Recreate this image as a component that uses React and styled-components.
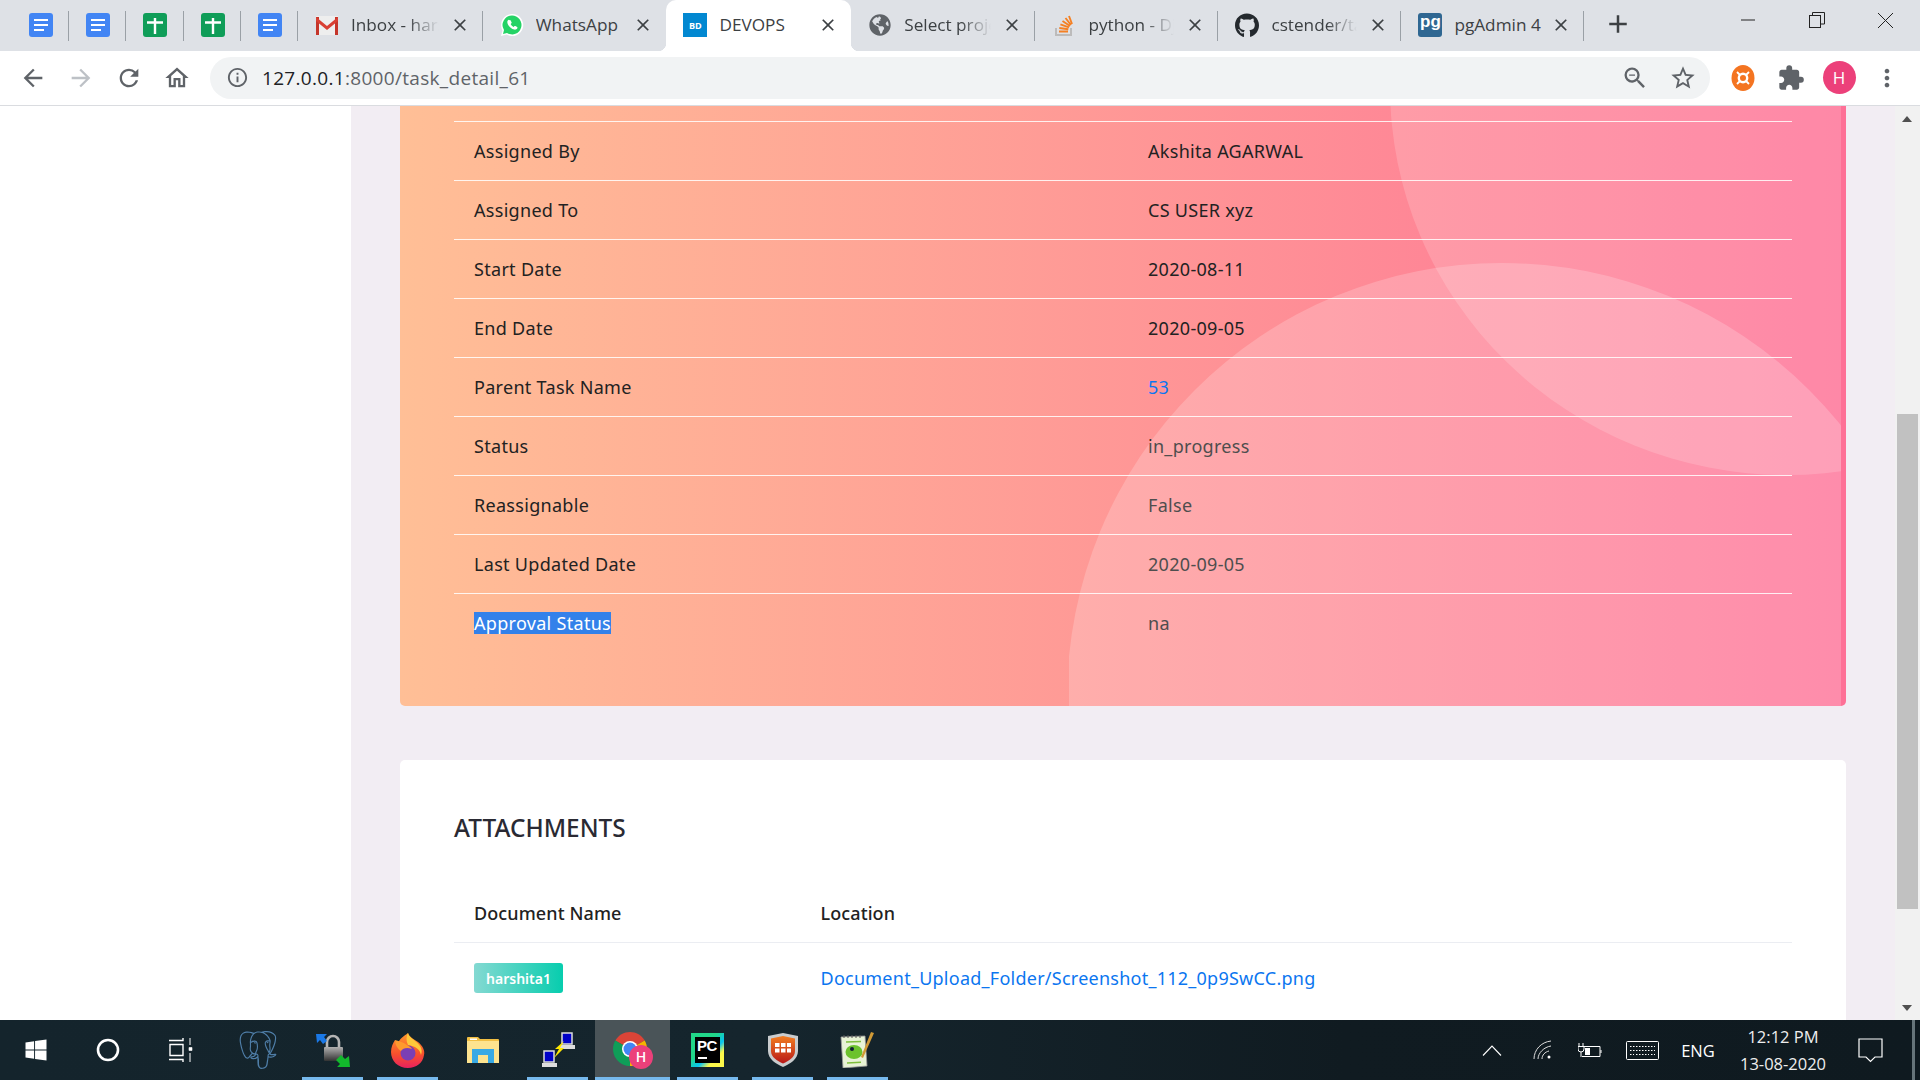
import React from "react";
import styled, { createGlobalStyle } from "styled-components";
import { MdArrowBack, MdArrowForward, MdRefresh, MdOutlineHome, MdInfoOutline, MdOutlineZoomOut, MdStarBorder, MdExtension, MdMoreVert, MdAdd, MdClose } from "react-icons/md";
import { FaGithub, FaGlobeAmericas, FaWindows } from "react-icons/fa";
import { SiPostgresql } from "react-icons/si";

const GlobalStyle = createGlobalStyle`
  html, body { margin: 0; padding: 0; height: 100%; overflow: hidden; background: #fff; }
  * { box-sizing: border-box; }
`;

const Screen = styled.div`
  width: 1920px;
  height: 1080px;
  display: flex;
  flex-direction: column;
  overflow: hidden;
  font-family: "Open Sans", "Liberation Sans", sans-serif;
`;

/* browser chrome */
const TabStrip = styled.div`
  height: 51px;
  flex: none;
  display: flex;
  background: #dee1e6;
  padding-left: 12px;
`;

const PinnedTab = styled.div`
  position: relative;
  width: 57.2px;
  display: flex;
  align-items: center;
  padding: 0 0 1px 17px;
  &:after {
    content: "";
    position: absolute;
    right: 0;
    top: 11px;
    bottom: 10px;
    width: 1px;
    background: #9aa0a6;
  }
`;

const Tab = styled.div`
  position: relative;
  flex: none;
  width: ${props => props.$w}px;
  display: flex;
  align-items: center;
  padding: 0 13px 1px 17px;
  background: ${props => props.$active ? "#fff" : "transparent"};
  border-radius: 10px 10px 0 0;
  ${props => props.$sep && `
    &:after {
      content: "";
      position: absolute;
      right: 0;
      top: 11px;
      bottom: 10px;
      width: 1px;
      background: #9aa0a6;
    }
  `}
  ${props => props.$active && `
    &:before {
      content: "";
      position: absolute;
      left: -8px;
      bottom: 0;
      width: 8px;
      height: 8px;
      background: radial-gradient(circle at 0 0, transparent 8px, #fff 8.5px);
    }
    &:after {
      content: "";
      position: absolute;
      right: -8px;
      bottom: 0;
      width: 8px;
      height: 8px;
      background: radial-gradient(circle at 100% 0, transparent 8px, #fff 8.5px);
    }
  `}
`;

const TabIcon = styled.span`
  flex: none;
  width: 24px;
  height: 24px;
  display: flex;
  align-items: center;
  justify-content: center;
`;

const TabTitle = styled.span`
  flex: 1;
  min-width: 0;
  margin: 0 ${props => props.$fade ? 11 : 4}px 2px 12px;
  font-size: 17.2px;
  color: #3c4043;
  white-space: nowrap;
  overflow: hidden;
  ${props => props.$fade && `
    -webkit-mask-image: linear-gradient(to right, #000 65%, transparent 100%);
    mask-image: linear-gradient(to right, #000 65%, transparent 100%);
  `}
`;

const TabClose = styled(MdClose)`
  flex: none;
  width: 20px;
  height: 20px;
  color: #3c4043;
`;

const NewTab = styled(MdAdd)`
  width: 30px;
  height: 30px;
  margin: 9px 0 0 19px;
  color: #3c4043;
`;

const WindowButtons = styled.div`
  margin-left: auto;
  display: flex;
  height: 40px;
`;

const WindowButton = styled.div`
  width: 69px;
  display: flex;
  align-items: center;
  justify-content: center;
`;

const Toolbar = styled.div`
  height: 55px;
  flex: none;
  display: flex;
  align-items: center;
  background: #fff;
  border-bottom: 1px solid #dadce0;
  padding-bottom: 1px;
`;

const NavButton = styled.div`
  flex: none;
  width: 48px;
  display: flex;
  justify-content: center;
  color: ${props => props.$off ? "#bdc1c6" : "#5f6368"};
  font-size: 28px;
`;

const NavGroup = styled.div`
  display: flex;
  padding-left: 9px;
  width: 210px;
`;

const Omnibox = styled.div`
  width: 1500px;
  height: 42px;
  display: flex;
  align-items: center;
  padding: 0 13px 0 16px;
  border-radius: 21px;
  background: #f1f3f4;
  color: #5f6368;
`;

const Url = styled.span`
  margin-left: 13px;
  font-size: 19px;
  letter-spacing: 0.31px;
  color: #5f6368;
  & b { font-weight: 400; color: #202124; }
`;

const OmniRight = styled.div`
  margin-left: auto;
  display: flex;
  align-items: center;
  gap: 20px;
  font-size: 28px;
`;

const ExtButtons = styled.div`
  display: flex;
  align-items: center;
  padding-left: 9px;
  color: #5f6368;
  font-size: 28px;
`;

const ExtSlot = styled.div`
  width: 48px;
  display: flex;
  justify-content: center;
`;

const Avatar = styled.div`
  width: 33px;
  height: 33px;
  border-radius: 50%;
  background: #ec407a;
  color: #fff;
  font-size: 17px;
  display: flex;
  align-items: center;
  justify-content: center;
`;

/* page */
const Viewport = styled.div`
  flex: 1;
  min-height: 0;
  display: flex;
  overflow: hidden;
`;

const Sidebar = styled.div`
  flex: none;
  width: 351px;
  background: #fff;
`;

const Main = styled.div`
  flex: 1;
  min-width: 0;
  padding: 0 49px;
  background: #f2edf3;
  font-family: "Noto Sans", "Open Sans", sans-serif;
  overflow: hidden;
`;

const GradientCard = styled.div`
  position: relative;
  height: 600px;
  padding: 15px 49px 0 54px;
  background: linear-gradient(to right, #ffbf96, #fe7096);
  border-right: 5px solid #fe7096;
  border-radius: 0 0 5px 5px;
  overflow: hidden;
`;

const Circles = styled.svg`
  position: absolute;
  left: 0;
  top: 0;
  pointer-events: none;
`;

const DetailRow = styled.div`
  height: 59px;
  display: grid;
  grid-template-columns: 674px 1fr;
  align-items: center;
  padding: 0 0 1px 20px;
  border-top: 1px solid rgba(255, 255, 255, 0.85);
  font-size: 18px;
  letter-spacing: 0.3px;
  color: #222;
`;

const Selected = styled.span`
  justify-self: start;
  line-height: 22px;
  background: #3381ea;
  color: #fff;
`;

const TaskLink = styled.a`
  color: #0b76f0;
`;

const WhiteCard = styled.div`
  margin-top: 54px;
  padding: 54px 54px 80px;
  background: #fff;
  border-radius: 5px;
`;

const CardTitle = styled.h4`
  margin: 0 0 42px;
  font-size: 24.4px;
  line-height: 28px;
  font-weight: 500;
  color: #2a2a33;
`;

const AttachRow = styled.div`
  display: grid;
  grid-template-columns: 346.5px 1fr;
  align-items: center;
  padding: ${props => props.$head ? "15px 20px 14px" : "20px"};
  border-bottom: ${props => props.$head ? "1px solid #ebedf2" : "none"};
  font-size: 18px;
  letter-spacing: ${props => props.$head ? 0.1 : 0.25}px;
  font-weight: ${props => props.$head ? 500 : 400};
  color: #222;
  line-height: 29px;
`;

const Badge = styled.span`
  justify-self: start;
  width: 89px;
  height: 30px;
  display: flex;
  align-items: center;
  justify-content: center;
  border-radius: 3px;
  background: linear-gradient(to right, #84d9d2, #07cdae);
  color: #fff;
  font-size: 14px;
  letter-spacing: 0;
  font-weight: 600;
`;

const DocLink = styled.a`
  color: #0b76f0;
`;

const ScrollTrack = styled.div`
  flex: none;
  width: 25px;
  position: relative;
  background: #f1f1f1;
`;

const ScrollThumb = styled.div`
  position: absolute;
  left: 2px;
  right: 2px;
  top: 308px;
  height: 495px;
  background: #c1c1c1;
`;

const ScrollArrow = styled.div`
  position: absolute;
  left: 7px;
  ${props => props.$down ? "bottom: 9px;" : "top: 10px;"}
  border-left: 5.5px solid transparent;
  border-right: 5.5px solid transparent;
  ${props => props.$down ? "border-top: 6px solid #505050;" : "border-bottom: 6px solid #505050;"}
`;

/* taskbar */
const Taskbar = styled.div`
  height: 60px;
  flex: none;
  display: flex;
  align-items: stretch;
  background: linear-gradient(to right, #14242c, #15252d 40%, #101b21 70%, #0f1a20);
`;

const ShellSlot = styled.div`
  width: 72px;
  display: flex;
  align-items: center;
  justify-content: center;
  color: #fff;
`;

const AppSlot = styled.div`
  position: relative;
  width: 75px;
  display: flex;
  align-items: center;
  justify-content: center;
  background: ${props => props.$active ? "#4a5458" : "transparent"};
  ${props => props.$running && `
    &:after {
      content: "";
      position: absolute;
      bottom: 0;
      left: ${props.$active ? 0 : 7}px;
      right: ${props.$active ? 0 : 7}px;
      height: 3px;
      background: #76b9ed;
    }
  `}
`;

const AppGroup = styled.div`
  display: flex;
  margin-left: 4px;
`;

const Tray = styled.div`
  margin-left: auto;
  display: flex;
  align-items: center;
  color: #fff;
  font-size: 16.5px;
`;

const TraySlot = styled.div`
  width: ${props => props.$w}px;
  display: flex;
  align-items: center;
  justify-content: center;
`;

const Clock = styled.div`
  width: 118px;
  text-align: center;
  line-height: 27px;
  font-size: 16.5px;
  color: #eee;
`;

const PeekLine = styled.div`
  width: 3px;
  height: 100%;
  background: #66747a;
`;

const DocsIcon = () => (
  <svg width="24" height="24" viewBox="0 0 24 24">
    <rect width="24" height="24" rx="3" fill="#4285f4" />
    <path d="M5 7h14M5 12h14M5 17h10" stroke="#fff" strokeWidth="2.2" />
  </svg>
);

const SheetsIcon = () => (
  <svg width="24" height="24" viewBox="0 0 24 24">
    <rect width="24" height="24" rx="3" fill="#0f9d58" />
    <path d="M4 9.5h16M12 5v16" stroke="#fff" strokeWidth="2.4" />
  </svg>
);

const GmailIcon = () => (
  <svg width="24" height="22" viewBox="0 0 24 22">
    <rect x="1" y="2" width="22" height="19" fill="#eee" />
    <path d="M1 21V3h3v18zM20 21V3h3v18z" fill="#c5352a" />
    <path d="M1 3l11 9 11-9v4l-11 9L1 7z" fill="#d93f33" />
  </svg>
);

const WhatsAppIcon = () => (
  <svg width="24" height="24" viewBox="0 0 24 24">
    <path d="M12 1a11 11 0 0 0-9.500 16.500L1 23l5.700-1.500A11 11 0 1 0 12 1z" fill="#fff" />
    <path d="M12 2.600a9.400 9.400 0 0 0-8 14.400l-1 3.900 4-1a9.400 9.400 0 1 0 5-17.300z" fill="#25d366" />
    <path d="M8.500 6.800c-.8.600-1.400 1.600-1.100 2.900.5 3 3.800 6.400 6.900 6.900 1.300.2 2.300-.3 2.900-1.100.4-.5.3-1.100-.1-1.400l-1.700-1c-.4-.2-.8-.2-1.100.1l-.6.700c-1.100-.4-2.600-1.900-3-3l.7-.6c.3-.3.4-.7.2-1.100l-1-1.700c-.3-.4-.8-.6-1.100-.2z" fill="#fff" />
  </svg>
);

const BdIcon = styled.span`
  width: 24px;
  height: 24px;
  background: #0288d1;
  color: #fff;
  font: 700 9px "Open Sans", sans-serif;
  display: flex;
  align-items: center;
  justify-content: center;
`;

const PgIcon = styled.span`
  width: 24px;
  height: 24px;
  border-radius: 3px;
  background: #2f6792;
  color: #fff;
  font: 700 17px/18px "Liberation Sans", sans-serif;
  display: flex;
  justify-content: center;
`;

const StackIcon = () => (
  <svg width="24" height="24" viewBox="0 0 24 24">
    <path d="M4 15v7h15v-7" fill="none" stroke="#bcbbbb" strokeWidth="2" />
    <path d="M7 18.500h9M7.300 15l9 1.200M8.400 11.400l8.600 3M10.500 8l7.500 5M13.500 5l5.500 7M17 3l3 8" stroke="#f48024" strokeWidth="1.900" fill="none" />
  </svg>
);

const MinimizeIcon = () => (
  <svg width="16" height="16" viewBox="0 0 16 16"><path d="M1 8h14" stroke="#222" strokeWidth="1" /></svg>
);

const RestoreIcon = () => (
  <svg width="16" height="16" viewBox="0 0 16 16" fill="none" stroke="#222" strokeWidth="1">
    <rect x="0.500" y="3.500" width="11" height="12" />
    <path d="M3.500 3.500v-3h12v11.500h-4" />
  </svg>
);

const CloseIcon = () => (
  <svg width="17" height="17" viewBox="0 0 17 17"><path d="M1 1l15 15M16 1L1 16" stroke="#222" strokeWidth="1" /></svg>
);

const ExtensionBall = () => (
  <svg width="24" height="26" viewBox="0 0 24 26">
    <ellipse cx="12" cy="13" rx="11.500" ry="13" fill="#f47421" />
    <circle cx="12" cy="13" r="4.200" fill="none" stroke="#fff" strokeWidth="2.400" />
    <path d="M6 7l3 3M18 7l-3 3M6 19l3-3M18 19l-3-3" stroke="#fff" strokeWidth="1.800" />
  </svg>
);

const TaskViewIcon = () => (
  <svg width="26" height="26" viewBox="0 0 26 26" fill="none" stroke="#fff" strokeWidth="1.400">
    <path d="M2 3.500h14V1M2 22.500h14V25M3 7.500h13v11H3z" />
    <path d="M22 10.500h3v3h-3z" fill="#fff" strokeWidth="0.600" />
    <path d="M23 1v7M23 16v9" strokeWidth="1" />
  </svg>
);

const ElephantIcon = styled(SiPostgresql)`
  width: 38px;
  height: 38px;
  color: #4f7ea8;
`;

const LockIcon = () => (
  <svg width="36" height="36" viewBox="0 0 36 36">
    <defs>
      <linearGradient id="lockBody" x1="0" y1="0" x2="0" y2="1">
        <stop offset="0" stopColor="#b0b0b0" />
        <stop offset="1" stopColor="#333" />
      </linearGradient>
    </defs>
    <path d="M12 16v-6a6 6 0 0 1 12 0v6" fill="none" stroke="#b5b5b5" strokeWidth="2.600" />
    <rect x="9" y="15" width="19" height="14" rx="1" fill="url(#lockBody)" />
    <path d="M1 2h11l-3 3 3 4-4 3-3-4-3 3z" fill="#1a78e6" />
    <path d="M35 35H22l3-3-4-4 5-5 4 4 4-3z" fill="#12b82c" />
  </svg>
);

const FirefoxIcon = () => (
  <svg width="35" height="36" viewBox="0 0 35 36">
    <defs>
      <linearGradient id="ffx" x1="0.500" y1="0" x2="0.500" y2="1">
        <stop offset="0" stopColor="#ff9a2e" />
        <stop offset="0.600" stopColor="#f8502d" />
        <stop offset="1" stopColor="#e8215f" />
      </linearGradient>
    </defs>
    <path d="M18 1c1 4 6 6 10 9 5 4 7 9 6 13-1 8-8 13-16 13C8 36 1 29 1 20 1 15 3 11 5 8c.5 2 1.500 3 3 4 1-5 6-8 10-11z" fill="url(#ffx)" />
    <path d="M18 1c1 5 9 8 12 13 2 3 2 6 1 9-1-6-6-9-13-10-2-4-2-8 0-12z" fill="#ffc93a" />
    <circle cx="18" cy="21" r="7.500" fill="#7b3fb5" />
    <path d="M5 8c3 1 8 2 12 5 2 1 4 2 5 4-5-2-9-1-11 2-3-2-6-6-6-11z" fill="#ff9a2e" />
  </svg>
);

const FolderIcon = () => (
  <svg width="32" height="26" viewBox="0 0 32 26">
    <path d="M0 1a1 1 0 0 1 1-1h10l2 2h18a1 1 0 0 1 1 1v5H0z" fill="#f2c044" />
    <rect x="3" y="1.500" width="7" height="1.500" fill="#fff" />
    <rect y="4" width="32" height="22" fill="#fde38f" />
    <path d="M5 12h22v14h-6v-8H11v8H5z" fill="#38a9e4" />
  </svg>
);

const NetworkIcon = () => (
  <svg width="34" height="36" viewBox="0 0 34 36">
    <rect x="21" y="1" width="10" height="11" fill="#0000c8" stroke="#ddd" strokeWidth="1.500" />
    <rect x="19" y="13" width="15" height="4" fill="#ddd" />
    <rect x="3" y="19" width="10" height="11" fill="#0000c8" stroke="#ddd" strokeWidth="1.500" />
    <rect x="1" y="31" width="15" height="4" fill="#ddd" />
    <path d="M23 9l-9 8h4l-5 9 10-10h-4z" fill="#ffe800" />
  </svg>
);

const ChromeIcon = () => (
  <svg width="42" height="38" viewBox="0 0 42 38">
    <path d="M18 18L3.300 9.500A17 17 0 0 1 32.700 9.500z" fill="#db4437" />
    <path d="M18 18L3.300 9.500A17 17 0 0 0 18 35z" fill="#0f9d58" />
    <path d="M18 18L32.700 9.500A17 17 0 0 1 18 35z" fill="#f4b400" />
    <circle cx="18" cy="18" r="8" fill="#fff" />
    <circle cx="18" cy="18" r="6.500" fill="#4285f4" />
    <circle cx="29" cy="26" r="12" fill="#ec407a" />
    <text x="29" y="31" textAnchor="middle" fontSize="14" fontWeight="600" fontFamily="Open Sans, sans-serif" fill="#fff">H</text>
  </svg>
);

const PyCharmBox = styled.span`
  width: 33px;
  height: 34px;
  padding: 4px;
  background: linear-gradient(135deg, #21d789 40%, #07c3f2 60%, #fcf84a 75%);
  display: flex;
`;

const PyCharmInner = styled.span`
  position: relative;
  flex: 1;
  background: #000;
  color: #fff;
  font: 700 15px/18px "Liberation Sans", sans-serif;
  padding-left: 2px;
  letter-spacing: -0.5px;
  &:after {
    content: "";
    position: absolute;
    left: 3px;
    bottom: 4px;
    width: 9px;
    height: 2px;
    background: #fff;
  }
`;

const ShieldIcon = () => (
  <svg width="30" height="34" viewBox="0 0 30 34">
    <defs>
      <linearGradient id="shieldFill" x1="0" y1="0" x2="0" y2="1">
        <stop offset="0" stopColor="#f27d20" />
        <stop offset="1" stopColor="#b81818" />
      </linearGradient>
    </defs>
    <path d="M15 0l15 3v15c0 8-8 13-15 16C8 31 0 26 0 18V3z" fill="#c9ccce" />
    <path d="M15 3l12 2.500V18c0 6-6 10-12 12.500C9 28 3 24 3 18V5.500z" fill="url(#shieldFill)" />
    <path d="M7 10h4.500v4H7zM13 10h4.500v4H13zM19 10h4v4h-4zM7 15.500h4.500v4H7zM13 15.500h4.500v4H13zM19 15.500h4v4h-4z" fill="#fff" />
  </svg>
);

const NotepadIcon = () => (
  <svg width="35" height="36" viewBox="0 0 35 36">
    <path d="M1 5l24-1 2 30-24 2z" fill="#e8f3d6" stroke="#999" strokeWidth="0.800" />
    <path d="M4 3v3M8 3v3M12 3v3M16 3v3M20 3v3" stroke="#555" />
    <path d="M6 10l15-.500M7 31l14-.800" stroke="#7fbf3c" strokeWidth="1.500" />
    <ellipse cx="14" cy="20" rx="8.500" ry="7" fill="#6cc22d" />
    <circle cx="12" cy="17" r="2" fill="#123" />
    <path d="M34 1L23 26l-2-1L31 0z" fill="#d09a36" />
  </svg>
);

const WifiIcon = () => (
  <svg width="20" height="20" viewBox="0 0 20 20" fill="none" stroke="#ddd" strokeWidth="1">
    <path d="M1 19C1 10 8 2 18 1M5 19c0-6 6-12 13-13M9 19c0-4 3-7 7-8" />
    <circle cx="16" cy="17" r="1.500" fill="#fff" stroke="none" />
  </svg>
);

const BatteryIcon = () => (
  <svg width="24" height="16" viewBox="0 0 24 16" fill="none" stroke="#fff" strokeWidth="1">
    <path d="M4 4.500h18v10H4" />
    <rect x="7" y="6" width="5" height="7" fill="#fff" stroke="none" />
    <path d="M23 8v3M1 1v3M5 1v3M0 4.500h6V7a3 3 0 0 1-6 0zM3 10v5" />
  </svg>
);

const KeyboardIcon = () => (
  <svg width="33" height="19" viewBox="0 0 33 19" fill="none" stroke="#fff" strokeWidth="1">
    <rect x="0.500" y="0.500" width="32" height="18" rx="1" />
    <path d="M4 5.500h25M4 9.500h25M4 13.500h4M10 13.500h13M25 13.500h4" strokeDasharray="1.500 1.500" />
  </svg>
);

const NotifyIcon = () => (
  <svg width="25" height="25" viewBox="0 0 25 25" fill="none" stroke="#fff" strokeWidth="1.200">
    <path d="M1 1h23v18h-7l-4.500 4.500L8 19H1z" />
  </svg>
);

const tabs = [
  { title: "Inbox - harshita", icon: <GmailIcon />, w: 184.8, sep: true, fade: true },
  { title: "WhatsApp", icon: <WhatsAppIcon />, w: 183.7 },
  { title: "DEVOPS", icon: <BdIcon>BD</BdIcon>, w: 184.8, active: true },
  { title: "Select project", icon: <FaGlobeAmericas size={22} color="#5f6368" />, w: 184.2, sep: true, fade: true },
  { title: "python - Django", icon: <StackIcon />, w: 183, sep: true, fade: true },
  { title: "cstender/task", icon: <FaGithub size={25} color="#24292e" />, w: 183, sep: true, fade: true },
  { title: "pgAdmin 4", icon: <PgIcon>pg</PgIcon>, w: 183, sep: true },
];

const details = [
  ["Assigned By", "Akshita AGARWAL"],
  ["Assigned To", "CS USER xyz"],
  ["Start Date", "2020-08-11"],
  ["End Date", "2020-09-05"],
  ["Parent Task Name", <TaskLink key="l">53</TaskLink>],
  ["Status", "in_progress"],
  ["Reassignable", "False"],
  ["Last Updated Date", "2020-09-05"],
  [<Selected key="s">Approval Status</Selected>, "na"],
];

const apps = [
  { icon: <ElephantIcon /> },
  { icon: <LockIcon />, running: true },
  { icon: <FirefoxIcon />, running: true },
  { icon: <FolderIcon /> },
  { icon: <NetworkIcon />, running: true },
  { icon: <ChromeIcon />, running: true, active: true },
  { icon: <PyCharmBox><PyCharmInner>PC</PyCharmInner></PyCharmBox>, running: true },
  { icon: <ShieldIcon />, running: true },
  { icon: <NotepadIcon />, running: true },
];

export default function App() {
  return (
    <Screen>
      <GlobalStyle />
      <TabStrip>
        {[DocsIcon, DocsIcon, SheetsIcon, SheetsIcon, DocsIcon].map((Icon, i) => (
          <PinnedTab key={i}><Icon /></PinnedTab>
        ))}
        {tabs.map(t => (
          <Tab key={t.title} $w={t.w} $sep={t.sep} $active={t.active}>
            <TabIcon>{t.icon}</TabIcon>
            <TabTitle $fade={t.fade}>{t.title}</TabTitle>
            <TabClose />
          </Tab>
        ))}
        <NewTab />
        <WindowButtons>
          <WindowButton><MinimizeIcon /></WindowButton>
          <WindowButton><RestoreIcon /></WindowButton>
          <WindowButton><CloseIcon /></WindowButton>
        </WindowButtons>
      </TabStrip>
      <Toolbar>
        <NavGroup>
          <NavButton><MdArrowBack /></NavButton>
          <NavButton $off><MdArrowForward /></NavButton>
          <NavButton><MdRefresh /></NavButton>
          <NavButton><MdOutlineHome /></NavButton>
        </NavGroup>
        <Omnibox>
          <MdInfoOutline size={23} />
          <Url><b>127.0.0.1</b>:8000/task_detail_61</Url>
          <OmniRight>
            <MdOutlineZoomOut />
            <MdStarBorder />
          </OmniRight>
        </Omnibox>
        <ExtButtons>
          <ExtSlot><ExtensionBall /></ExtSlot>
          <ExtSlot><MdExtension /></ExtSlot>
          <ExtSlot><Avatar>H</Avatar></ExtSlot>
          <ExtSlot><MdMoreVert /></ExtSlot>
        </ExtButtons>
      </Toolbar>
      <Viewport>
        <Sidebar />
        <Main>
          <GradientCard>
            {details.map((d, i) => (
              <DetailRow key={i}>
                {d[0]}
                <span>{d[1]}</span>
              </DetailRow>
            ))}
            <Circles width="1441" height="600" viewBox="0 0 1441 600">
              <ellipse cx="1386" cy="-19" rx="396" ry="388" fill="rgba(255,255,255,0.17)" />
              <clipPath id="lowerClip"><rect x="669" y="0" width="772" height="600" /></clipPath>
              <circle cx="1102" cy="592" r="435" fill="rgba(255,255,255,0.2)" clipPath="url(#lowerClip)" />
            </Circles>
          </GradientCard>
          <WhiteCard>
            <CardTitle>ATTACHMENTS</CardTitle>
            <AttachRow $head>
              <span>Document Name</span>
              <span>Location</span>
            </AttachRow>
            <AttachRow>
              <Badge>harshita1</Badge>
              <DocLink>Document_Upload_Folder/Screenshot_112_0p9SwCC.png</DocLink>
            </AttachRow>
          </WhiteCard>
        </Main>
        <ScrollTrack>
          <ScrollArrow />
          <ScrollThumb />
          <ScrollArrow $down />
        </ScrollTrack>
      </Viewport>
      <Taskbar>
        <ShellSlot><FaWindows size={24} /></ShellSlot>
        <ShellSlot>
          <svg width="24" height="24" viewBox="0 0 24 24"><circle cx="12" cy="12" r="10" fill="none" stroke="#fff" strokeWidth="2.600" /></svg>
        </ShellSlot>
        <ShellSlot><TaskViewIcon /></ShellSlot>
        <AppGroup>
          {apps.map((a, i) => (
            <AppSlot key={i} $running={a.running} $active={a.active}>{a.icon}</AppSlot>
          ))}
        </AppGroup>
        <Tray>
          <TraySlot $w={54}>
            <svg width="20" height="11" viewBox="0 0 20 11"><path d="M1 10.500L10 1l9 9.500" fill="none" stroke="#fff" strokeWidth="1.100" /></svg>
          </TraySlot>
          <TraySlot $w={48}><WifiIcon /></TraySlot>
          <TraySlot $w={46}><BatteryIcon /></TraySlot>
          <TraySlot $w={59}><KeyboardIcon /></TraySlot>
          <TraySlot $w={52}>ENG</TraySlot>
          <Clock>12:12 PM<br />13-08-2020</Clock>
          <TraySlot $w={56}><NotifyIcon /></TraySlot>
          <TraySlot $w={14} />
          <PeekLine />
          <TraySlot $w={5} />
        </Tray>
      </Taskbar>
    </Screen>
  );
}
